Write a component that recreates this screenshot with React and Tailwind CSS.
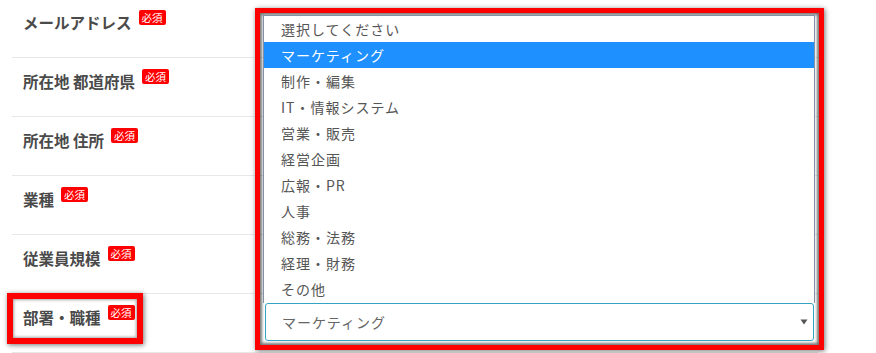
const rows = ["メールアドレス", "所在地 都道府県", "所在地 住所", "業種", "従業員規模", "部署・職種"]

const options = [
  "選択してください",
  "マーケティング",
  "制作・編集",
  "IT・情報システム",
  "営業・販売",
  "経営企画",
  "広報・PR",
  "人事",
  "総務・法務",
  "経理・財務",
  "その他",
]

export default function App() {
  return (
    <div
      className="relative w-[876px] h-[353px] bg-white overflow-hidden"
      style={{ fontFamily: '"Noto Sans CJK JP", "Noto Sans", sans-serif' }}
    >
      {/* form rows */}
      <div className="ml-[12px] w-[806px] -mt-px">
        {rows.map((label) => (
          <div key={label} className="h-[59px] border-b border-[#e8e8e8] flex items-start pl-[11px] pt-[12px]">
            <span className="text-[15.5px] leading-[22px] font-semibold text-[#4a4a4a] whitespace-pre">{label}</span>
            <span className="ml-[7px] -mt-px bg-[#ff0000] text-white text-[10.5px] leading-[15px] px-[3px] rounded-[2px]">
              必須
            </span>
          </div>
        ))}
      </div>

      {/* highlight on label */}
      <div className="absolute left-[7px] top-[293px] w-[136px] h-[51px] border-[6px] border-[#ff0000] shadow-[1px_1px_5px_rgba(0,0,0,0.55),inset_0_0_3px_1px_rgba(0,0,0,0.35)]" />

      {/* open select, highlighted */}
      <div className="absolute left-[255px] top-[8px] w-[569px] h-[342px] border-[5px] border-[#ff0000] shadow-[1px_1px_5px_rgba(0,0,0,0.55),inset_0_0_3px_2px_rgba(0,0,0,0.55)] flex flex-col">
        <div className="mt-[2px] ml-[3px] mr-[4px] border border-b-0 border-[#8391a8] bg-white">
          {options.map((o, i) => (
            <div
              key={o}
              className={
                (i === 0 ? "h-[26px] " : "h-[26px] ") +
                (i === 1 ? "bg-[#1e90ff] text-white " : "text-[#555] ") +
                "flex items-center pl-[17px] text-[14px] tracking-[1px]"
              }
            >
              {o}
            </div>
          ))}
          <div className="h-px" />
        </div>
        <div className="ml-[5px] mr-[5px] h-[38px] border border-[#35a4c4] rounded-[3px] bg-white flex items-center justify-between pl-[16px] pr-[5px]">
          <span className="text-[14px] tracking-[1px] text-[#666]">マーケティング</span>
          <svg width="8" height="6" viewBox="0 0 8 6">
            <path d="M0.5 0.5 L7.5 0.5 L4 5.5 Z" fill="#555" />
          </svg>
        </div>
      </div>
    </div>
  )
}
